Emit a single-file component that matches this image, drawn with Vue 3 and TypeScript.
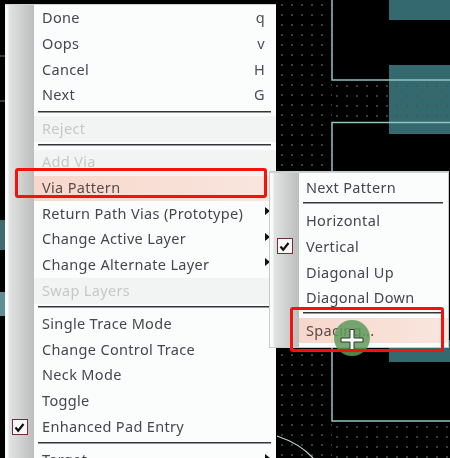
<script setup lang="ts">
interface Entry {
  label?: string;
  key?: string;
  sep?: boolean;
  off?: boolean;
  on?: boolean;
  hot?: boolean;
  arrow?: boolean;
}

const mainMenu: Entry[] = [
  { label: "Done", key: "q" },
  { label: "Oops", key: "v" },
  { label: "Cancel", key: "H" },
  { label: "Next", key: "G" },
  { sep: true },
  { label: "Reject", off: true },
  { sep: true },
  { label: "Add Via", off: true },
  { label: "Via Pattern", hot: true },
  { label: "Return Path Vias (Prototype)", arrow: true },
  { label: "Change Active Layer", arrow: true },
  { label: "Change Alternate Layer", arrow: true },
  { label: "Swap Layers", off: true },
  { sep: true },
  { label: "Single Trace Mode" },
  { label: "Change Control Trace" },
  { label: "Neck Mode" },
  { label: "Toggle" },
  { label: "Enhanced Pad Entry", on: true },
  { sep: true },
  { label: "Target", arrow: true },
];

const subMenu: Entry[] = [
  { label: "Next Pattern" },
  { sep: true },
  { label: "Horizontal" },
  { label: "Vertical", on: true },
  { label: "Diagonal Up" },
  { label: "Diagonal Down" },
  { sep: true },
  { label: "Spacing...", hot: true },
];

const menus = [
  { name: "main", items: mainMenu },
  { name: "sub", items: subMenu },
];
</script>

<template>
  <div class="board">
    <div class="pad" style="left: 389px; top: 0; height: 20px"></div>
    <div class="pad" style="left: 389px; top: 65px; height: 69px"></div>
    <div class="pad" style="left: 389px; top: 340px; height: 22px"></div>
    <div class="pad side" style="left: 0; top: 220px; width: 6px; height: 30px"></div>
    <div class="pad side light" style="left: 0; top: 292px; width: 6px; height: 24px"></div>
    <div class="dots" style="left: 277px; top: 0; width: 55px; height: 458px"></div>
    <div class="dots" style="left: 332px; top: 81px; width: 118px; height: 41px"></div>
    <div class="dots" style="left: 332px; top: 422px; width: 118px; height: 36px"></div>

    <svg class="traces" width="450" height="458" viewBox="0 0 450 458" fill="none">
      <path d="M332 0V80H450M450 122.500H332V172M332 347V421H450" stroke="#8fc4bf" stroke-width="1.500" />
      <path d="M277 436C292 441 304 448 313 458" stroke="#c9d0d0" stroke-width="1.200" />
      <path d="M0 56H6M0 101H6" stroke="#6d7676" />
    </svg>

    <div v-for="menu in menus" :key="menu.name" class="menu" :class="menu.name">
      <template v-for="(item, i) in menu.items" :key="i">
        <div v-if="item.sep" class="sep"></div>
        <div v-else class="row" :class="{ off: item.off, hot: item.hot }">
          <div class="gutter">
            <span v-if="item.on" class="check">
              <svg width="13" height="13" viewBox="0 0 13 13" fill="none">
                <path d="M2.500 6.500L5.200 9.800L10.500 3" stroke="#111" stroke-width="2.200" />
              </svg>
            </span>
          </div>
          <div class="label">
            <span>{{ item.label }}</span>
            <span v-if="item.key" class="key">{{ item.key }}</span>
            <span v-if="item.arrow" class="arrow"></span>
          </div>
        </div>
      </template>
    </div>

    <svg class="cursor" width="44" height="44" viewBox="0 0 44 44">
      <circle cx="22" cy="20" r="18" fill="#5f9a5a" fill-opacity="0.85" />
      <path d="M20 11.500H24V20H33V24H24V32.500H20V24H11V20H20Z" fill="#fff" stroke="#2a3a2a" stroke-width="1" />
    </svg>

    <div class="mark" style="left: 15px; top: 168px; width: 252px; height: 30px"></div>
    <div class="mark" style="left: 290px; top: 307px; width: 154px; height: 45px"></div>
  </div>
</template>

<style scoped>
.board {
  position: relative;
  width: 450px;
  height: 458px;
  overflow: hidden;
  background: #000;
  font-family: "Noto Sans", "Open Sans", sans-serif;
}
.pad {
  position: absolute;
  width: 61px;
  background: #33696f;
}
.pad.side {
  background: #3f6a70;
}
.pad.light {
  background: #5f8f95;
}
.dots {
  position: absolute;
  background-image: radial-gradient(circle, #4c5454 0.6px, transparent 1px);
  background-size: 10px 10px;
}
.traces {
  position: absolute;
  left: 0;
  top: 0;
}
.menu {
  position: absolute;
  display: flex;
  flex-direction: column;
  box-sizing: border-box;
  background: linear-gradient(90deg, #fafafa 3px, #e2e3e3 4px, #bcbdbd 29px, #fbfcfc 29px);
  border-top: 1px solid #cfd2d2;
  color: #46464e;
  font-size: 14.500px;
  letter-spacing: 0.330px;
  filter: blur(0.35px);
}
.menu.main {
  left: 5px;
  top: 4px;
  width: 271px;
  height: 470px;
  padding-top: 1px;
}
.menu.sub {
  left: 270px;
  top: 172px;
  width: 178px;
  height: 175px;
  padding-top: 1.500px;
  box-shadow: 0 0 0 1px #c6caca;
}
.row {
  display: flex;
  height: 25.700px;
  flex: none;
}
.gutter {
  width: 29px;
  flex: none;
  display: flex;
  align-items: center;
  justify-content: center;
}
.label {
  flex: 1;
  display: flex;
  align-items: center;
  justify-content: space-between;
  padding: 0 12px 3px 8px;
  white-space: nowrap;
}
.sub .label {
  padding-left: 7px;
  padding-bottom: 0;
}
.row.off .label {
  background: #f2f3f3;
  color: #c6c8c8;
}
.row.hot .label {
  background: linear-gradient(90deg, #f7d7cb, #f9e6df);
  color: #5a4a4c;
}
.sep {
  flex: none;
  height: 7.700px;
  margin-left: 33px;
  margin-right: 5px;
  box-sizing: border-box;
  background: linear-gradient(#33363a, #33363a) 0 2px / 100% 1.500px no-repeat;
}
.sub .sep {
  height: 7.300px;
}
.key {
  color: #4d4d55;
  margin-right: -1px;
}
.arrow {
  width: 0;
  height: 0;
  margin-right: -6px;
  margin-bottom: 3px;
  border-left: 5px solid #111;
  border-top: 4px solid transparent;
  border-bottom: 4px solid transparent;
}
.check {
  display: flex;
  align-items: center;
  justify-content: center;
  box-sizing: border-box;
  width: 16px;
  height: 16px;
  background: #f6f6f6;
  border: 1.500px solid #6d3038;
}
.cursor {
  position: absolute;
  left: 330px;
  top: 318px;
}
.mark {
  position: absolute;
  box-sizing: border-box;
  border: 3px solid #f5110c;
  border-radius: 3px;
}
</style>
